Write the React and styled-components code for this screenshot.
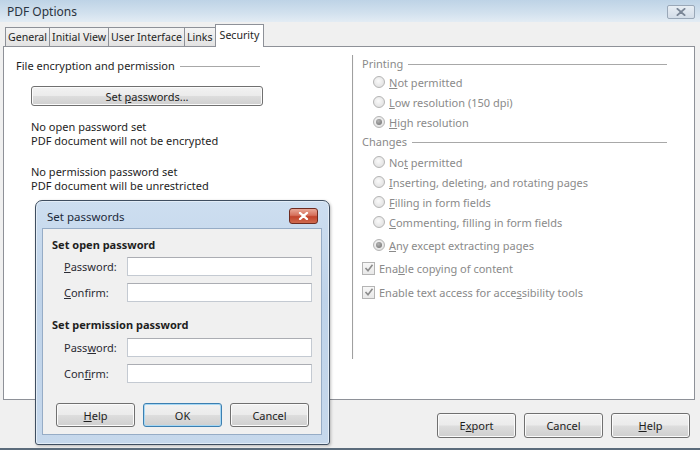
import React from "react";
import styled, { createGlobalStyle } from "styled-components";

const GlobalStyle = createGlobalStyle`
  html, body { margin: 0; padding: 0; background: #f0f0f0; }
  body {
    font-family: "Noto Sans", "Open Sans", sans-serif;
    font-size: 11px;
    color: #1e1e1e;
  }
  * { box-sizing: border-box; }
`;

const Window = styled.div`
  position: relative;
  width: 700px;
  height: 450px;
  background: #f0f0f0;
  border-bottom: 2px solid #5b6c7c;
  overflow: hidden;
  display: flex;
  flex-direction: column;
`;

const TitleBar = styled.div`
  height: 22px;
  flex: none;
  display: flex;
  justify-content: space-between;
  align-items: flex-start;
  padding: 0 5px 0 7px;
  background: linear-gradient(#bed3e6, #d2e1ee 60%, #e3ecf4);
`;

const Title = styled.div`
  font-size: 12px;
  line-height: 23px;
  color: #2a3340;
`;

const WinClose = styled.div`
  margin-top: 5px;
  width: 28px;
  height: 14px;
  border: 1px solid #9aa8b8;
  border-radius: 2px;
  background: linear-gradient(#e8eef4, #d3dde8);
  display: flex;
  align-items: center;
  justify-content: center;
`;

const TabRow = styled.div`
  position: relative;
  z-index: 2;
  height: 22px;
  margin-top: 2px;
  padding-left: 6px;
  display: flex;
  align-items: flex-end;
`;

const Tab = styled.div`
  height: ${(p) => (p.$active ? 23 : 19)}px;
  margin-bottom: ${(p) => (p.$active ? -1 : 0)}px;
  margin-left: -1px;
  padding: 0 ${(p) => (p.$active ? 4 : 2)}px;
  font-size: 10.6px;
  line-height: ${(p) => (p.$active ? 21 : 18)}px;
  border: 1px solid #8e9198;
  border-bottom: none;
  background: ${(p) => (p.$active ? "#fff" : "linear-gradient(#f4f4f4, #e2e2e2)")};
  white-space: nowrap;
`;

const Panel = styled.div`
  position: relative;
  z-index: 1;
  height: 354px;
  margin: 0 5px 0 3px;
  border: 1px solid #8e9198;
  background: #fff;
  display: flex;
`;

const LeftCol = styled.div`
  width: 348px;
  padding: 11px 0 0 12px;
`;

const Section = styled.div`
  width: 247px;
`;

const GroupHead = styled.div`
  display: flex;
  align-items: center;
  line-height: 16px;
  margin-right: ${(p) => p.$gapRight || 0}px;
  margin-top: ${(p) => p.$top || 0}px;
  color: ${(p) => (p.$muted ? "#8a8a8a" : "#1e1e1e")};

  &::after {
    content: "";
    flex: 1;
    height: 1px;
    margin-left: 5px;
    background: #a8a8a8;
  }
`;

const Button = styled.div`
  width: ${(p) => (p.$wide ? "auto" : "79px")};
  height: ${(p) => p.$h || 25}px;
  margin: ${(p) => p.$margin || 0};
  border: 1px solid ${(p) => (p.$focus ? "#3c7fb1" : "#707070")};
  border-radius: 3px;
  background: linear-gradient(#f2f2f2 0%, #ebebeb 48%, #dddddd 52%, #cfcfcf 100%);
  box-shadow: inset 0 0 0 1px ${(p) => (p.$focus ? "#a6d7f3" : "#fbfbfb")};
  display: flex;
  align-items: center;
  justify-content: center;
  color: #1e1e1e;
`;

const U = styled.span`
  text-decoration: underline;
  text-underline-offset: 1px;
`;

const InfoBlock = styled.div`
  margin: ${(p) => p.$top}px 0 0 15px;
  line-height: 14px;
`;

const VSep = styled.div`
  width: 2px;
  height: 304px;
  margin-top: 8px;
  border-left: 1px solid #a0a0a0;
  border-right: 1px solid #fafafa;
`;

const RightCol = styled.div`
  flex: 1;
  padding: 9px 27px 0 8px;
  color: #8a8a8a;
`;

const OptRow = styled.div`
  height: 20px;
  margin-top: ${(p) => p.$top || 0}px;
  margin-left: ${(p) => (p.$check ? 0 : 11)}px;
  display: flex;
  align-items: center;
  gap: 4px;
  white-space: nowrap;
`;

const Radio = styled.span`
  width: 12px;
  height: 12px;
  border-radius: 50%;
  border: 1px solid #b4b4b4;
  background: radial-gradient(circle at 45% 40%, #fafafa 0%, #e4e4e4 70%);
  display: flex;
  align-items: center;
  justify-content: center;

  &::after {
    content: "";
    display: ${(p) => (p.$on ? "block" : "none")};
    width: 6px;
    height: 6px;
    border-radius: 50%;
    background: radial-gradient(circle at 40% 35%, #b4b4b4, #6e6e6e);
  }
`;

const Check = styled.span`
  width: 13px;
  height: 13px;
  border: 1px solid #b4b4b4;
  background: linear-gradient(#f8f8f8, #e8e8e8);
  display: flex;
  align-items: center;
  justify-content: center;
`;

const Footer = styled.div`
  flex: 1;
  display: flex;
  justify-content: flex-end;
  align-items: flex-start;
  gap: 8px;
  padding: 13px 10px 0 0;
`;

/* modal "Set passwords" window floating over the main dialog */
const Dialog = styled.div`
  position: absolute;
  left: 35px;
  top: 200px;
  width: 295px;
  height: 245px;
  z-index: 5;
  padding: 0 7px 9px 6px;
  border: 1px solid #3f4e60;
  border-radius: 7px 7px 3px 3px;
  background: linear-gradient(#cddef0, #bfd3e9 40%, #c6d8ec);
  box-shadow: inset 0 0 0 1px #e3edf7, 1px 1px 3px rgba(0, 0, 0, 0.25);
  display: flex;
  flex-direction: column;
`;

const DlgTitleBar = styled.div`
  height: 27px;
  flex: none;
  display: flex;
  justify-content: space-between;
  align-items: flex-start;
`;

const DlgTitle = styled.div`
  font-size: 11.5px;
  line-height: 14px;
  padding: 9px 0 0 5px;
  color: #1c2a3a;
`;

const RedClose = styled.div`
  width: 29px;
  height: 16px;
  margin: 7px 4px 0 0;
  border: 1px solid #6e2b20;
  border-radius: 3px;
  background: linear-gradient(#e9a898 0%, #d6705c 45%, #c2432c 55%, #cf6a4e 100%);
  display: flex;
  align-items: center;
  justify-content: center;
`;

const Client = styled.div`
  flex: 1;
  border: 1px solid #96acc6;
  background: #f0f0f0;
  padding: 8px 9px 0 9px;
`;

const BoldHead = styled.div`
  font-weight: bold;
  line-height: 16px;
  margin-top: ${(p) => p.$top || 0}px;
`;

const FieldRow = styled.div`
  display: flex;
  align-items: center;
  margin-top: ${(p) => p.$top}px;
`;

const FieldLabel = styled.div`
  width: 75px;
  padding-left: 12px;
  color: #2b2b33;
`;

const Input = styled.div`
  width: 185px;
  height: 19px;
  border: 1px solid #c4cad2;
  border-top-color: #abadb3;
  background: #fff;
`;

const DlgButtons = styled.div`
  display: flex;
  gap: 8px;
  margin: 20px 0 0 4px;
`;

const XMark = ({ color, w = 12, h = 9, sw = 2.4 }) => (
  <svg width={w} height={h} viewBox="0 0 12 9">
    <path d="M2 1 L10 8 M10 1 L2 8" stroke={color} strokeWidth={sw} strokeLinecap="round" />
  </svg>
);

const TickMark = () => (
  <svg width="10" height="10" viewBox="0 0 10 10">
    <path d="M1.5 5 L4 7.8 L8.5 1.8" fill="none" stroke="#8c8c8c" strokeWidth="1.6" />
  </svg>
);

const printing = [
  { pre: "", u: "N", post: "ot permitted" },
  { pre: "", u: "L", post: "ow resolution (150 dpi)" },
  { pre: "", u: "H", post: "igh resolution", on: true },
];

const changes = [
  { pre: "No", u: "t", post: " permitted" },
  { pre: "", u: "I", post: "nserting, deleting, and rotating pages" },
  { pre: "", u: "F", post: "illing in form fields" },
  { pre: "", u: "C", post: "ommenting, filling in form fields" },
];

const Label = ({ pre, u, post }) => (
  <span>
    {pre}
    <U>{u}</U>
    {post}
  </span>
);

export default function App() {
  return (
    <>
      <GlobalStyle />
      <Window>
        <TitleBar>
          <Title>PDF Options</Title>
          <WinClose>
            <XMark color="#7a8696" w={12} h={8} sw={2.2} />
          </WinClose>
        </TitleBar>

        <TabRow>
          <Tab>General</Tab>
          <Tab>Initial View</Tab>
          <Tab>User Interface</Tab>
          <Tab>Links</Tab>
          <Tab $active>Security</Tab>
        </TabRow>

        <Panel>
          <LeftCol>
            <Section>
              <GroupHead $gapRight={3}>File encryption and permission</GroupHead>
              <Button $wide $h={20} $margin="12px 0 0 15px">
                <span>
                  Set <U>p</U>asswords...
                </span>
              </Button>
            </Section>
            <InfoBlock $top={14}>
              No open password set
              <br />
              PDF document will not be encrypted
            </InfoBlock>
            <InfoBlock $top={17}>
              No permission password set
              <br />
              PDF document will be unrestricted
            </InfoBlock>
          </LeftCol>

          <VSep />

          <RightCol>
            <GroupHead $muted>Printing</GroupHead>
            {printing.map((o, i) => (
              <OptRow key={i}>
                <Radio $on={o.on} />
                <Label {...o} />
              </OptRow>
            ))}
            <GroupHead $muted $top={2}>Changes</GroupHead>
            {changes.map((o, i) => (
              <OptRow key={i} $top={i === 0 ? 2 : 0}>
                <Radio />
                <Label {...o} />
              </OptRow>
            ))}
            <OptRow $top={3}>
              <Radio $on />
              <Label pre="" u="A" post="ny except extracting pages" />
            </OptRow>
            <OptRow $check $top={3}>
              <Check>
                <TickMark />
              </Check>
              <Label pre="Ena" u="b" post="le copying of content" />
            </OptRow>
            <OptRow $check $top={4}>
              <Check>
                <TickMark />
              </Check>
              <Label pre="Enable text access for acce" u="s" post="sibility tools" />
            </OptRow>
          </RightCol>
        </Panel>

        <Footer>
          <Button>
            <span>
              E<U>x</U>port
            </span>
          </Button>
          <Button>Cancel</Button>
          <Button>
            <span>
              <U>H</U>elp
            </span>
          </Button>
        </Footer>

        <Dialog>
          <DlgTitleBar>
            <DlgTitle>Set passwords</DlgTitle>
            <RedClose>
              <XMark color="#ffffff" w={11} h={8} sw={2.4} />
            </RedClose>
          </DlgTitleBar>
          <Client>
            <BoldHead>Set open password</BoldHead>
            <FieldRow $top={4}>
              <FieldLabel>
                <U>P</U>assword:
              </FieldLabel>
              <Input />
            </FieldRow>
            <FieldRow $top={7}>
              <FieldLabel>
                <U>C</U>onfirm:
              </FieldLabel>
              <Input />
            </FieldRow>
            <BoldHead $top={15}>Set permission password</BoldHead>
            <FieldRow $top={5}>
              <FieldLabel>
                Pass<U>w</U>ord:
              </FieldLabel>
              <Input />
            </FieldRow>
            <FieldRow $top={7}>
              <FieldLabel>
                Con<U>f</U>irm:
              </FieldLabel>
              <Input />
            </FieldRow>
            <DlgButtons>
              <Button $h={24}>
                <span>
                  <U>H</U>elp
                </span>
              </Button>
              <Button $h={24} $focus>
                OK
              </Button>
              <Button $h={24}>Cancel</Button>
            </DlgButtons>
          </Client>
        </Dialog>
      </Window>
    </>
  );
}
